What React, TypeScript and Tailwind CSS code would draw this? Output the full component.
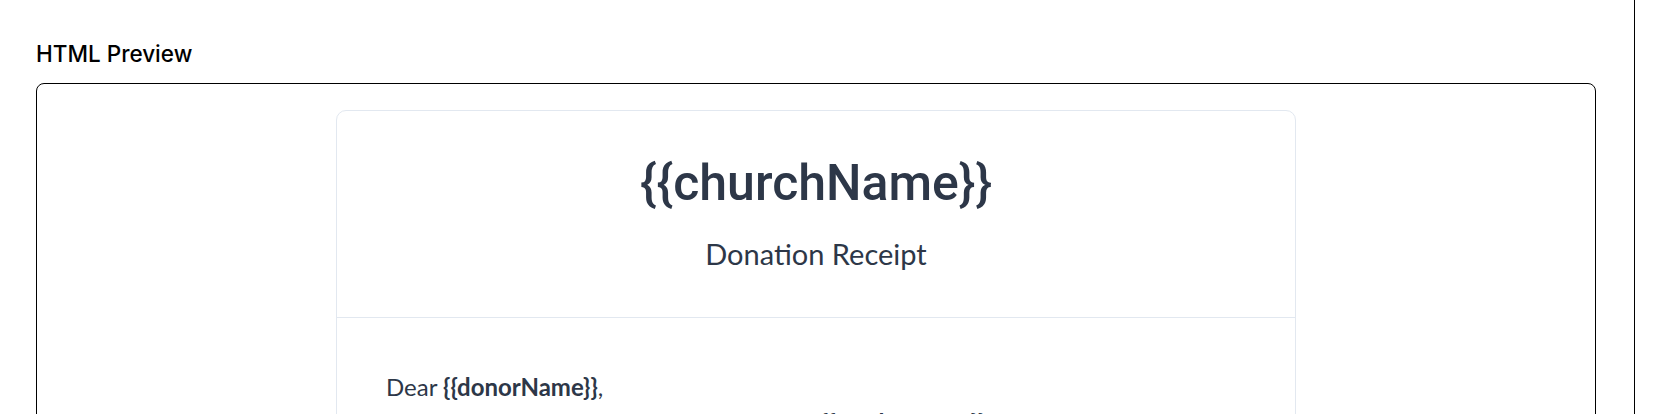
import React from "react";

export default function App() {
  return (
    <div className="flex h-[414px] w-[1674px] overflow-hidden bg-white">
      <div className="w-[1635px] shrink-0 border-r border-black pl-[36px] pr-[38px] pt-[40px]">
        <h2 className="mb-[15px] font-['Inter',sans-serif] text-[22.5px] font-medium leading-[28px] text-black">
          HTML Preview
        </h2>
        <div className="h-[400px] rounded-lg border border-black pt-[26px]">
          <div className="mx-auto w-[960px] rounded-[10px] border border-[#e2e8f0] text-[#2d3748]">
            <div className="border-b border-[#e2e8f0] pb-[45px] pt-[44px] text-center">
              <h1 className="font-['Roboto',Arial,sans-serif] text-[50px] font-medium leading-[56px]">
                {"{{churchName}}"}
              </h1>
              <p className="mt-[25px] font-['Lato',sans-serif] text-[29px] leading-[36px]">
                Donation Receipt
              </p>
            </div>
            <div className="px-[49px] pt-[51px] font-['Lato',sans-serif] text-[24px] leading-[36px]">
              <p>
                Dear <strong className="font-bold">{"{{donorName}}"}</strong>,
              </p>
              <p>
                Thank you for your generous donation of{" "}
                <strong className="font-bold">{"{{totalAmount}}"}</strong> received on{" "}
                <strong className="font-bold">{"{{donationDate}}"}</strong>.
              </p>
            </div>
          </div>
        </div>
      </div>
    </div>
  );
}
